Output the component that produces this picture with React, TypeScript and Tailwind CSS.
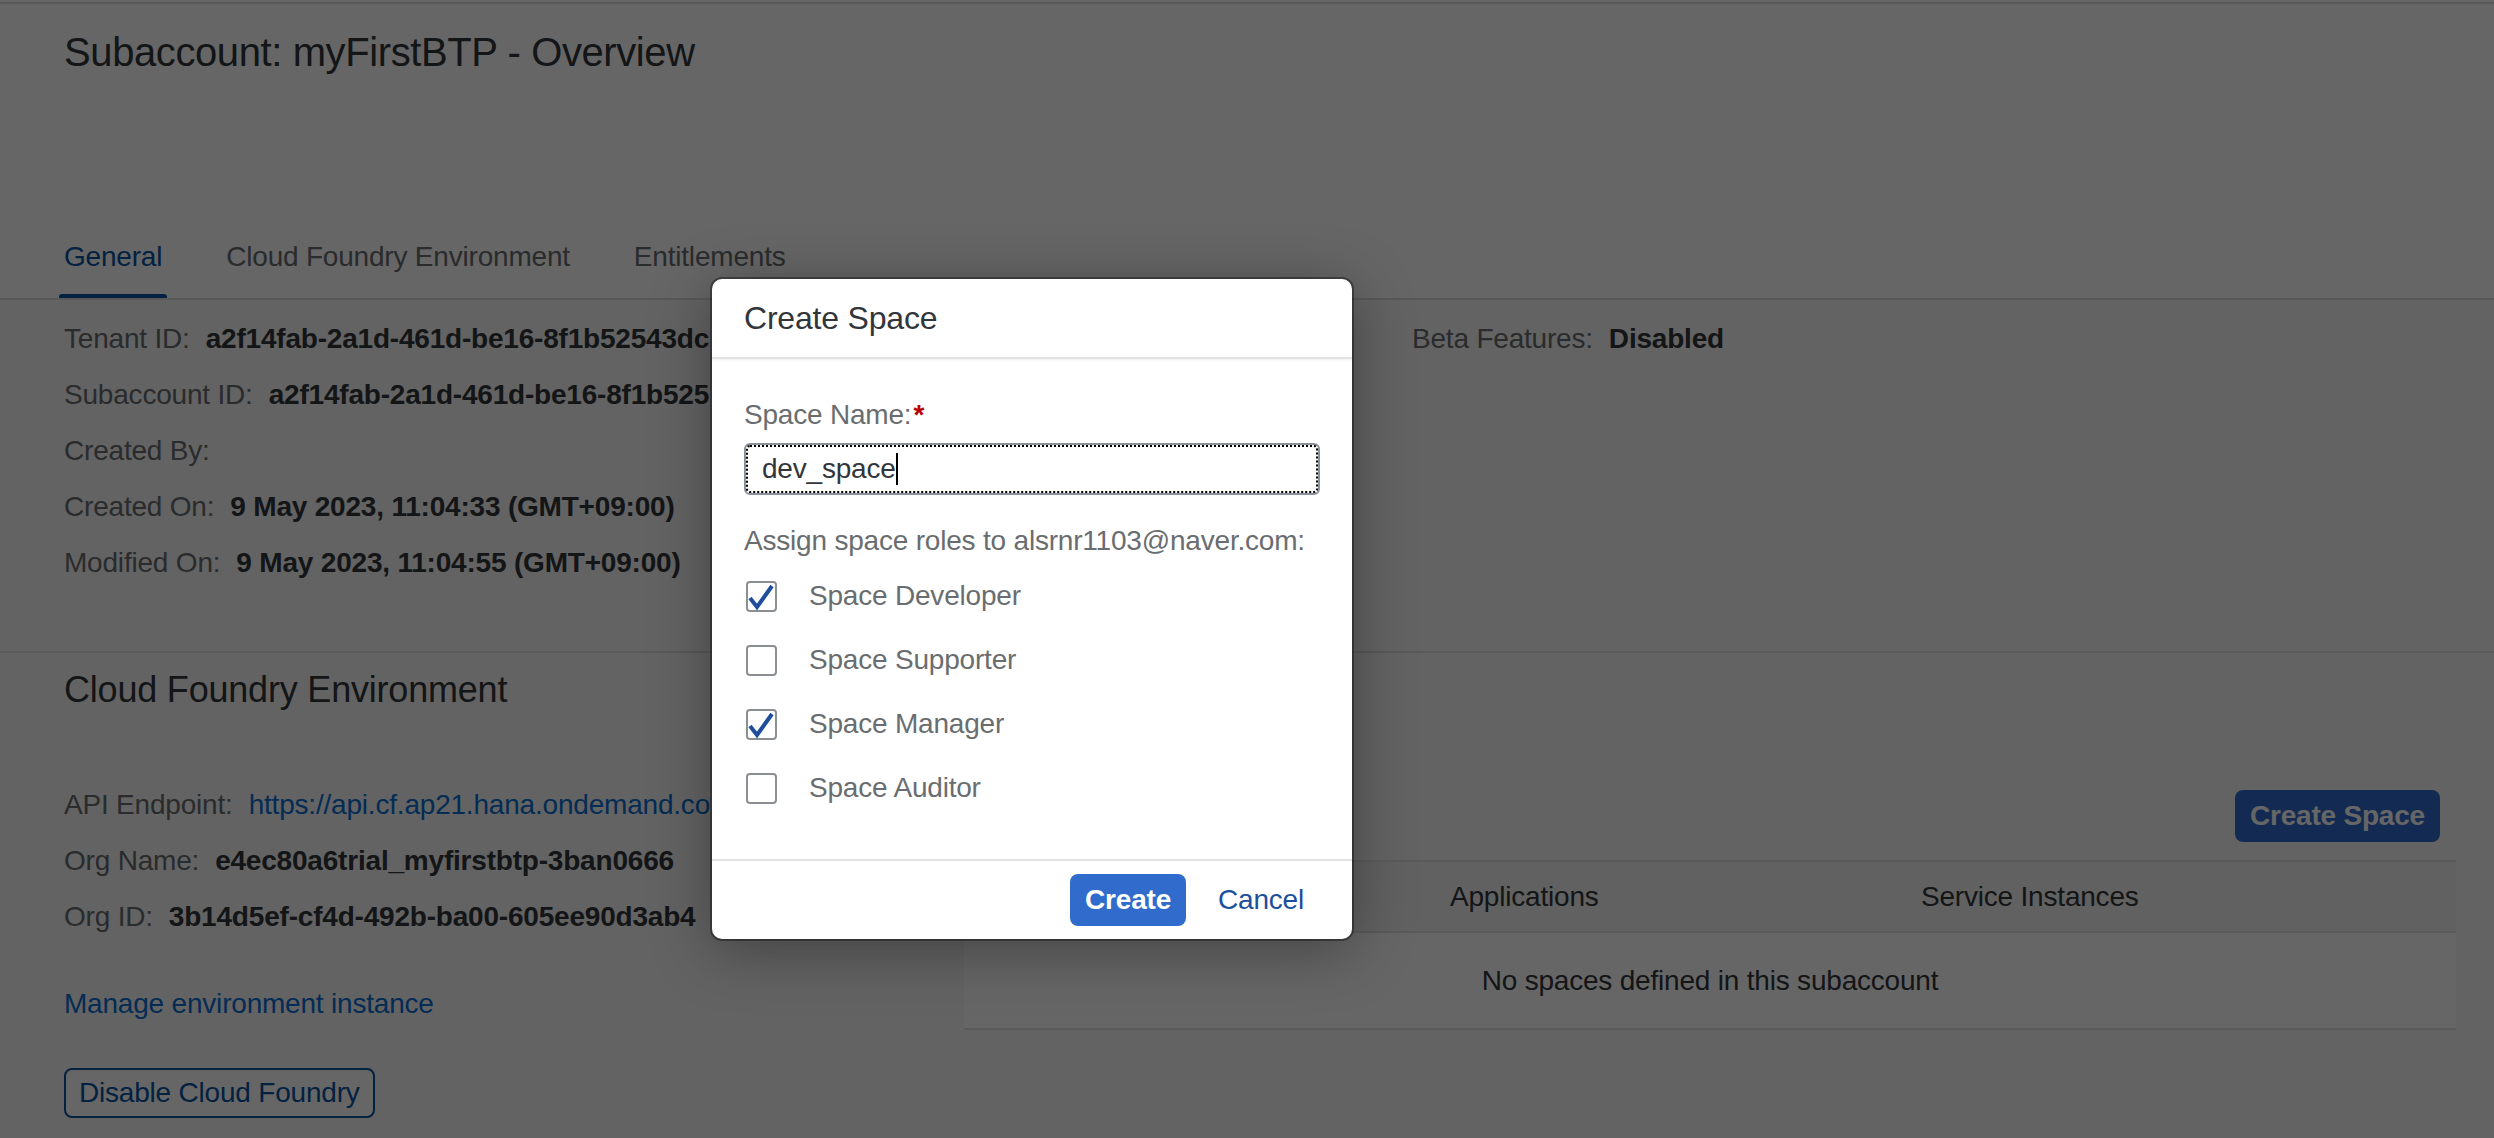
const font = "font-['Liberation_Sans',Arial,sans-serif]"

const Field = ({label, value}: {label: string, value?: string}) => (
    <div className="h-[56px] flex items-center whitespace-nowrap">
        <span className="text-[#6a6d70]">{label}</span>
        {value && <span className="ml-[16px] font-bold text-[#32363a]">{value}</span>}
    </div>
)

const Check = ({checked, label}: {checked: boolean, label: string}) => (
    <div className="h-[64px] flex items-center">
        <div className="ml-[2px] w-[31px] h-[31px] rounded-[4px] border-2 border-[#8b8f94] bg-white flex items-center justify-center">
            {checked && (
                <svg width="27" height="27" viewBox="0 0 27 27" fill="none">
                    <path d="M2 15 L9 24 L24 3" stroke="#1f4f9b" strokeWidth="4" strokeLinejoin="miter"/>
                </svg>
            )}
        </div>
        <span className="ml-[32px] text-[#6a6d70]">{label}</span>
    </div>
)

const App = () => {
    const tabs = ['General', 'Cloud Foundry Environment', 'Entitlements']

    return (
        <div className={`relative w-full h-[1138px] overflow-hidden bg-[#f7f7f7] text-[28px] tracking-[-0.2px] ${font}`}>
            {/* page header */}
            <header className="bg-white border-b-2 border-[#dedede]">
                <div className="h-[2px]"></div>
                <div className="h-[2px] bg-[#dcdcdc]"></div>
                <div className="h-[212px] pl-[64px] pt-[24px]">
                    <h1 className="text-[40px] leading-[48px] tracking-[-0.4px] text-[#32363a]">Subaccount: myFirstBTP - Overview</h1>
                </div>
                <nav className="h-[82px] pl-[64px] flex gap-[64px]">
                    {tabs.map((t, i) => (
                        <div key={t} className={`relative h-full flex items-center ${i === 0 ? 'text-[#0854a0]' : 'text-[#6a6d70]'}`}>
                            {t}
                            {i === 0 && <div className="absolute bottom-0 -left-[5px] -right-[5px] h-[4px] rounded-t-[3px] bg-[#0854a0]"></div>}
                        </div>
                    ))}
                </nav>
            </header>

            {/* general section */}
            <section className="pt-[11px] pb-[60px] pl-[64px] border-b-2 border-[#dedede] grid grid-cols-[1348px_1fr]">
                <div>
                    <Field label="Tenant ID:" value="a2f14fab-2a1d-461d-be16-8f1b52543dc"/>
                    <Field label="Subaccount ID:" value="a2f14fab-2a1d-461d-be16-8f1b525"/>
                    <Field label="Created By:"/>
                    <Field label="Created On:" value="9 May 2023, 11:04:33 (GMT+09:00)"/>
                    <Field label="Modified On:" value="9 May 2023, 11:04:55 (GMT+09:00)"/>
                </div>
                <div>
                    <Field label="Beta Features:" value="Disabled"/>
                </div>
            </section>

            {/* cloud foundry section */}
            <section className="pt-[15px] pl-[64px] pr-[38px]">
                <h2 className="text-[36px] leading-[44px] text-[#32363a]">Cloud Foundry Environment</h2>
                <div className="mt-[65px] grid grid-cols-[900px_1fr] items-start">
                    <div>
                        <div className="h-[56px] flex items-center whitespace-nowrap">
                            <span className="text-[#6a6d70]">API Endpoint:</span>
                            <span className="ml-[16px] text-[#0a6ed1]">https://api.cf.ap21.hana.ondemand.co</span>
                        </div>
                        <Field label="Org Name:" value="e4ec80a6trial_myfirstbtp-3ban0666"/>
                        <Field label="Org ID:" value="3b14d5ef-cf4d-492b-ba00-605ee90d3ab4"/>
                        <div className="mt-[31px] h-[56px] flex items-center text-[#0a6ed1]">Manage environment instance</div>
                        <button className="mt-[36px] h-[50px] px-[13px] rounded-[8px] border-2 border-[#0854a0] bg-white text-[#0854a0]">
                            Disable Cloud Foundry
                        </button>
                    </div>
                    <div className="pt-[13px] flex flex-col">
                        <button className="self-end mr-[16px] h-[52px] px-[15px] rounded-[8px] bg-[#316ccc] text-white font-bold">
                            Create Space
                        </button>
                        <div className="mt-[18px]">
                            <div className="h-[73px] grid grid-cols-[470px_471px_1fr] items-center border-y-2 border-[#e0e0e0] bg-[#f2f2f2] text-[#32363a]">
                                <div className="pl-[16px]">Name</div>
                                <div className="pl-[16px]">Applications</div>
                                <div className="pl-[16px]">Service Instances</div>
                            </div>
                            <div className="h-[97px] flex items-center justify-center border-b-2 border-[#e0e0e0] bg-white text-[#32363a]">
                                No spaces defined in this subaccount
                            </div>
                        </div>
                    </div>
                </div>
            </section>

            {/* block layer */}
            <div className="absolute inset-0 bg-black/60"></div>

            {/* dialog */}
            <div className="absolute left-[712px] top-[279px] w-[640px] h-[660px] flex flex-col bg-white rounded-[10px] shadow-[0_0_0_2px_rgba(0,0,0,0.35),0_10px_60px_rgba(0,0,0,0.35)] overflow-hidden">
                <div className="h-[80px] shrink-0 px-[32px] flex items-center border-b-2 border-[#e2e2e2] shadow-[0_1px_3px_rgba(0,0,0,0.08)] text-[32px] text-[#32363a]">
                    Create Space
                </div>
                <div className="flex-1 px-[32px] pt-[36px]">
                    <div className="h-[40px] flex items-center text-[#6a6d70]">
                        Space Name:<span className="ml-[2px] font-bold text-[#bb0000]">*</span>
                    </div>
                    <div className="mt-[8px] h-[52px] rounded-[6px] border-2 border-[#89919a] outline-2 outline-dotted outline-black outline-offset-[-4px] flex items-center pl-[16px] text-[#32363a]">
                        <span>dev_space</span>
                        <span className="w-[2px] h-[32px] bg-black"></span>
                    </div>
                    <div className="mt-[26px] h-[40px] flex items-center text-[#6a6d70]">
                        Assign space roles to alsrnr1103@naver.com:
                    </div>
                    <div className="mt-[3px]">
                        <Check checked label="Space Developer"/>
                        <Check checked={false} label="Space Supporter"/>
                        <Check checked label="Space Manager"/>
                        <Check checked={false} label="Space Auditor"/>
                    </div>
                </div>
                <div className="h-[80px] shrink-0 border-t-2 border-[#e2e2e2] flex items-center justify-end gap-[16px] pr-[32px]">
                    <button className="h-[52px] px-[15px] rounded-[8px] bg-[#316ccc] text-white font-bold">Create</button>
                    <button className="h-[52px] px-[16px] text-[#1c4f9c]">Cancel</button>
                </div>
            </div>
        </div>
    )
}

export default App
